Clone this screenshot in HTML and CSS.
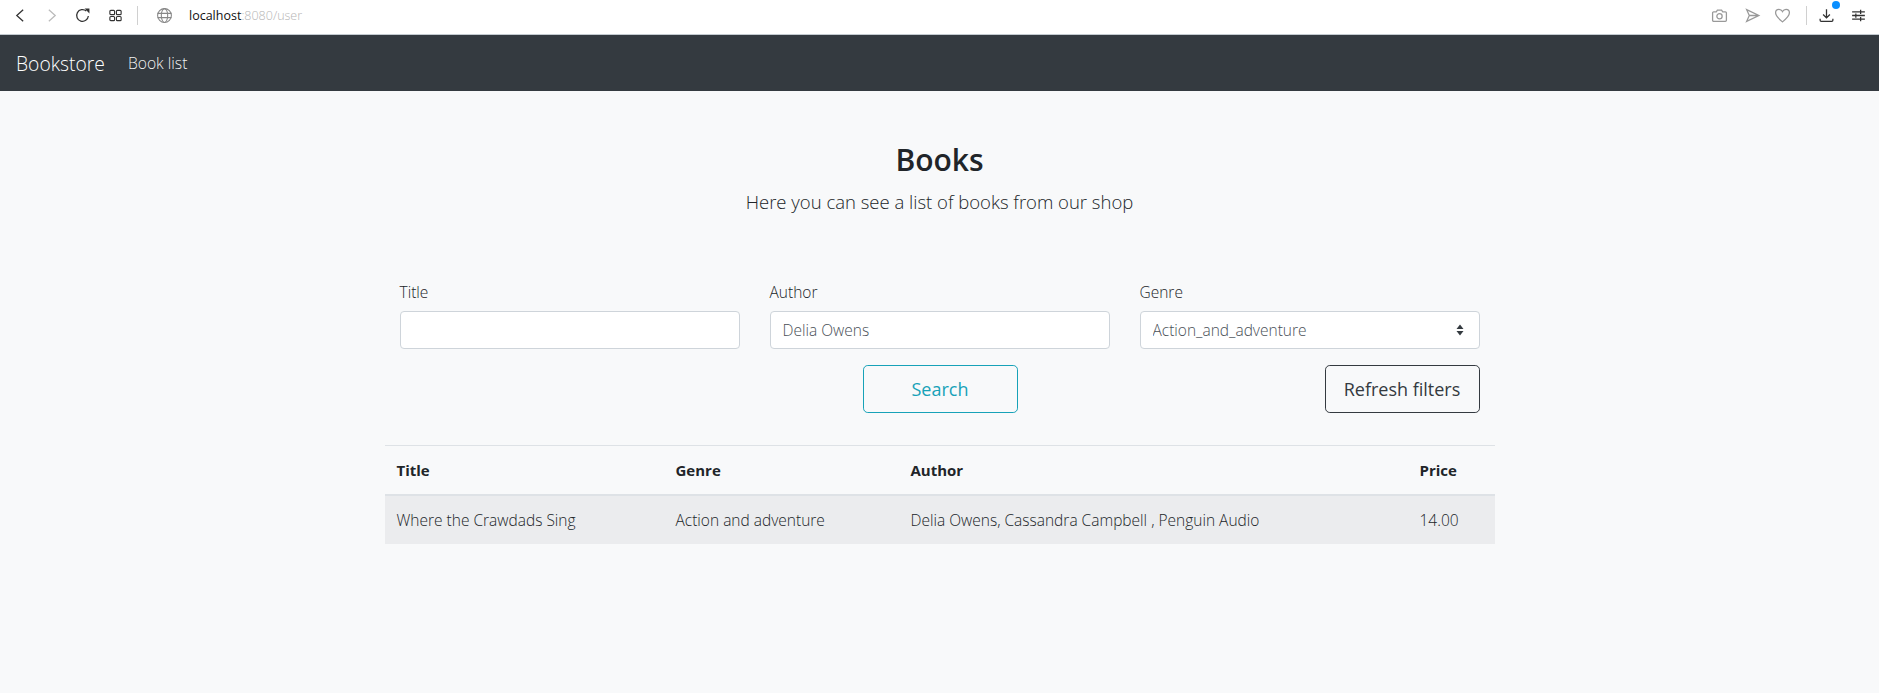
FILE: index.html
```html
<!DOCTYPE html>
<html>

<head>
    <title>Bookstore</title>
    <meta content="width=device-width, initial-scale=1" name="viewport" />
    <meta http-equiv="Content-Type" content="text/html; charset=utf-8" />
    <link rel="stylesheet" href="styles.css">
</head>

<body>
    <div class="toolbar">
        <div class="toolbar-left">
            <svg class="icon back" viewBox="0 0 16 16"><path d="M10.5 2.5 4.5 8l6 5.5" /></svg>
            <svg class="icon forward" viewBox="0 0 16 16"><path d="M5.5 2.5 11.5 8l-6 5.5" /></svg>
            <svg class="icon reload" viewBox="0 0 16 16"><path d="M13.5 8.5A5.5 5.5 0 1 1 11.6 3.8" /><path class="solid" d="M10 1.5h4.500v4.500z" /></svg>
            <svg class="icon apps" viewBox="0 0 16 16"><rect x="2" y="2.500" width="5" height="4.500" rx="1" /><rect x="9" y="2.500" width="5" height="4.500" rx="1" /><rect x="2" y="9" width="5" height="4.500" rx="1" /><rect x="9" y="9" width="5" height="4.500" rx="1" /></svg>
            <div class="separator"></div>
            <svg class="icon globe" viewBox="0 0 16 16"><circle cx="8" cy="8" r="6.500" /><ellipse cx="8" cy="8" rx="3" ry="6.500" /><path d="M1.500 6h13M1.500 10h13" /></svg>
            <div class="url"><span class="host">localhost</span>:8080/user</div>
        </div>
        <div class="toolbar-right">
            <svg class="icon muted camera" viewBox="0 0 16 16"><path d="M2.500 4.500H5L6 3h4l1 1.500h2.500a1 1 0 0 1 1 1v7a1 1 0 0 1-1 1h-11a1 1 0 0 1-1-1v-7a1 1 0 0 1 1-1z" /><circle cx="8" cy="8.700" r="2.500" /></svg>
            <svg class="icon muted send" viewBox="0 0 16 16"><path d="M2.500 2.500 14 8 2.500 13.500 5 8zM5 8h9" /></svg>
            <svg class="icon muted heart" viewBox="0 0 16 16"><path d="M8 14C4 10.800 1.500 8.500 1.500 5.500 1.500 3.500 3 2.200 4.700 2.200 6 2.200 7.300 3 8 4.300 8.700 3 10 2.200 11.300 2.200 13 2.200 14.500 3.500 14.500 5.500 14.500 8.500 12 10.800 8 14z" /></svg>
            <div class="separator"></div>
            <div class="download">
                <svg class="icon" viewBox="0 0 16 16"><path d="M8 2v8M4.800 7 8 10.300 11.200 7M2 11v1.500a1 1 0 0 0 1 1h10a1 1 0 0 0 1-1V11" /></svg>
                <span class="badge"></span>
            </div>
            <svg class="icon sliders" viewBox="0 0 16 16"><path d="M2 4.500h12M2 8h12M2 11.500h12M10 2.500v4M5.500 6v4M10 9.500v4" /></svg>
        </div>
    </div>

    <nav class="navbar">
        <a class="brand">Bookstore</a>
        <a class="nav-link">Book list</a>
    </nav>

    <main class="page">
        <div class="container">
            <div class="intro">
                <h2 class="heading">Books</h2>
                <p class="lead">Here you can see a list of books from our shop</p>
            </div>

            <form class="filters">
                <div class="field">
                    <label class="label">Title</label>
                    <input class="control" type="text" value="">
                </div>
                <div class="field">
                    <label class="label">Author</label>
                    <input class="control" type="text" value="Delia Owens">
                </div>
                <div class="field">
                    <label class="label">Genre</label>
                    <div class="select-wrap">
                        <select class="control select">
                            <option>Action_and_adventure</option>
                        </select>
                        <svg class="select-arrows" viewBox="0 0 8 12"><path d="M4 0.500 7.500 5H0.500zM4 11.500 0.500 7h7z" /></svg>
                    </div>
                </div>
                <div class="field action action-mid">
                    <button class="btn btn-search" type="button">Search</button>
                </div>
                <div class="field action action-end">
                    <button class="btn btn-refresh" type="button">Refresh filters</button>
                </div>
            </form>

            <table class="books">
                <thead>
                    <tr>
                        <th class="col-title">Title</th>
                        <th class="col-genre">Genre</th>
                        <th class="col-author">Author</th>
                        <th class="col-price">Price</th>
                    </tr>
                </thead>
                <tbody>
                    <tr>
                        <td>Where the Crawdads Sing</td>
                        <td>Action and adventure</td>
                        <td>Delia Owens, Cassandra Campbell , Penguin Audio</td>
                        <td>14.00</td>
                    </tr>
                </tbody>
            </table>
        </div>
    </main>
</body>

</html>
```

FILE: styles.css
```css
* {
    box-sizing: border-box;
    margin: 0;
    padding: 0;
}

html,
body {
    height: 100%;
    width: 100%;
}

body {
    background: #f8f9fa;
    color: #212529;
    display: flex;
    flex-direction: column;
    font-family: 'Open Sans', 'Noto Sans', sans-serif;
    font-size: 15.5px;
    font-weight: 300;
    overflow: hidden;
}

/* browser chrome */
.toolbar {
    align-items: center;
    background: #fff;
    border-bottom: 1px solid #c3cad0;
    display: flex;
    flex: none;
    height: 35px;
    justify-content: space-between;
    padding: 0 12px 4px 12px;
}

.toolbar-left,
.toolbar-right {
    align-items: center;
    display: flex;
}

.icon {
    fill: none;
    height: 17px;
    stroke: #333;
    stroke-width: 1.2;
    width: 17px;
}

.icon .solid {
    fill: #333;
    stroke: none;
}

.icon.muted {
    stroke: #999;
}

.icon.forward {
    margin-left: 14px;
    stroke: #bbb;
}

.icon.reload {
    margin-left: 14px;
}

.icon.apps {
    height: 15px;
    margin-left: 17px;
    width: 15px;
}

.icon.globe {
    stroke: #888;
    stroke-width: 1;
}

.toolbar-left .separator {
    margin: 0 18px 0 14px;
}

.separator {
    background: #d0d0d0;
    height: 19px;
    width: 1px;
}

.url {
    color: #b5b5b5;
    font-size: 12.5px;
    margin-left: 16px;
}

.host {
    color: #111;
    font-weight: 400;
}

.icon.send {
    margin-left: 16px;
}

.icon.heart {
    margin-left: 13px;
}

.icon.sliders {
    margin-left: 15px;
}

.toolbar-right .separator {
    margin: 0 11px 0 15px;
}

.download {
    display: flex;
    position: relative;
}

.badge {
    background: #0a8fff;
    border-radius: 50%;
    height: 8px;
    position: absolute;
    right: -5px;
    top: -6px;
    width: 8px;
}

/* navbar */
.navbar {
    align-items: center;
    background: #343a40;
    display: flex;
    flex: none;
    height: 56px;
    padding: 1px 16px 0;
}

.brand {
    color: #fff;
    font-size: 19.3px;
    margin-right: 23px;
}

.nav-link {
    color: rgba(255, 255, 255, .95);
    font-size: 15.7px;
    margin-bottom: 2px;
}

/* page */
.page {
    flex: 1;
}

.container {
    margin: 0 auto;
    max-width: 1110px;
}

.intro {
    padding-top: 49px;
    text-align: center;
}

.heading {
    font-size: 30px;
    font-weight: 600;
    line-height: 40px;
}

.lead {
    font-size: 18.5px;
    line-height: 30px;
    margin-top: 7px;
}

.filters {
    display: grid;
    gap: 16px 30px;
    grid-template-columns: repeat(3, 1fr);
    margin-top: 65px;
    padding: 0 15px;
}

.label {
    display: block;
    line-height: 20px;
    margin-bottom: 9px;
}

.control {
    background: #fff;
    border: 1px solid #ced4da;
    border-radius: 4px;
    color: #495057;
    display: block;
    font-family: inherit;
    font-size: 15.5px;
    font-weight: 300;
    height: 38px;
    padding: 6px 12px;
    width: 100%;
}

.select-wrap {
    position: relative;
}

.select {
    appearance: none;
}

.select-arrows {
    fill: #343a40;
    height: 12px;
    position: absolute;
    right: 16px;
    top: 13px;
    width: 8px;
}

.action {
    display: flex;
    justify-content: center;
}

.action-mid {
    grid-column: 2;
}

.action-end {
    grid-column: 3;
    justify-content: flex-end;
}

.btn {
    background: transparent;
    border: 1px solid;
    border-radius: 4.8px;
    font-family: inherit;
    font-size: 18px;
    font-weight: 400;
    height: 48px;
    width: 155px;
}

.btn-search {
    border-color: #17a2b8;
    color: #17a2b8;
    margin-left: 1px;
}

.btn-refresh {
    border-color: #343a40;
    color: #343a40;
}

/* table */
.books {
    border-collapse: collapse;
    margin-top: 32px;
    table-layout: fixed;
    width: 100%;
}

.books th,
.books td {
    line-height: 24px;
    padding: 12px;
    text-align: left;
}

.books th {
    border-bottom: 2px solid #dee2e6;
    border-top: 1px solid #dee2e6;
    font-size: 15px;
    font-weight: 700;
}

.books td {
    background: #ebecee;
}

.col-title {
    width: 279px;
}

.col-genre {
    width: 235px;
}

.col-price {
    width: 87px;
}
```
